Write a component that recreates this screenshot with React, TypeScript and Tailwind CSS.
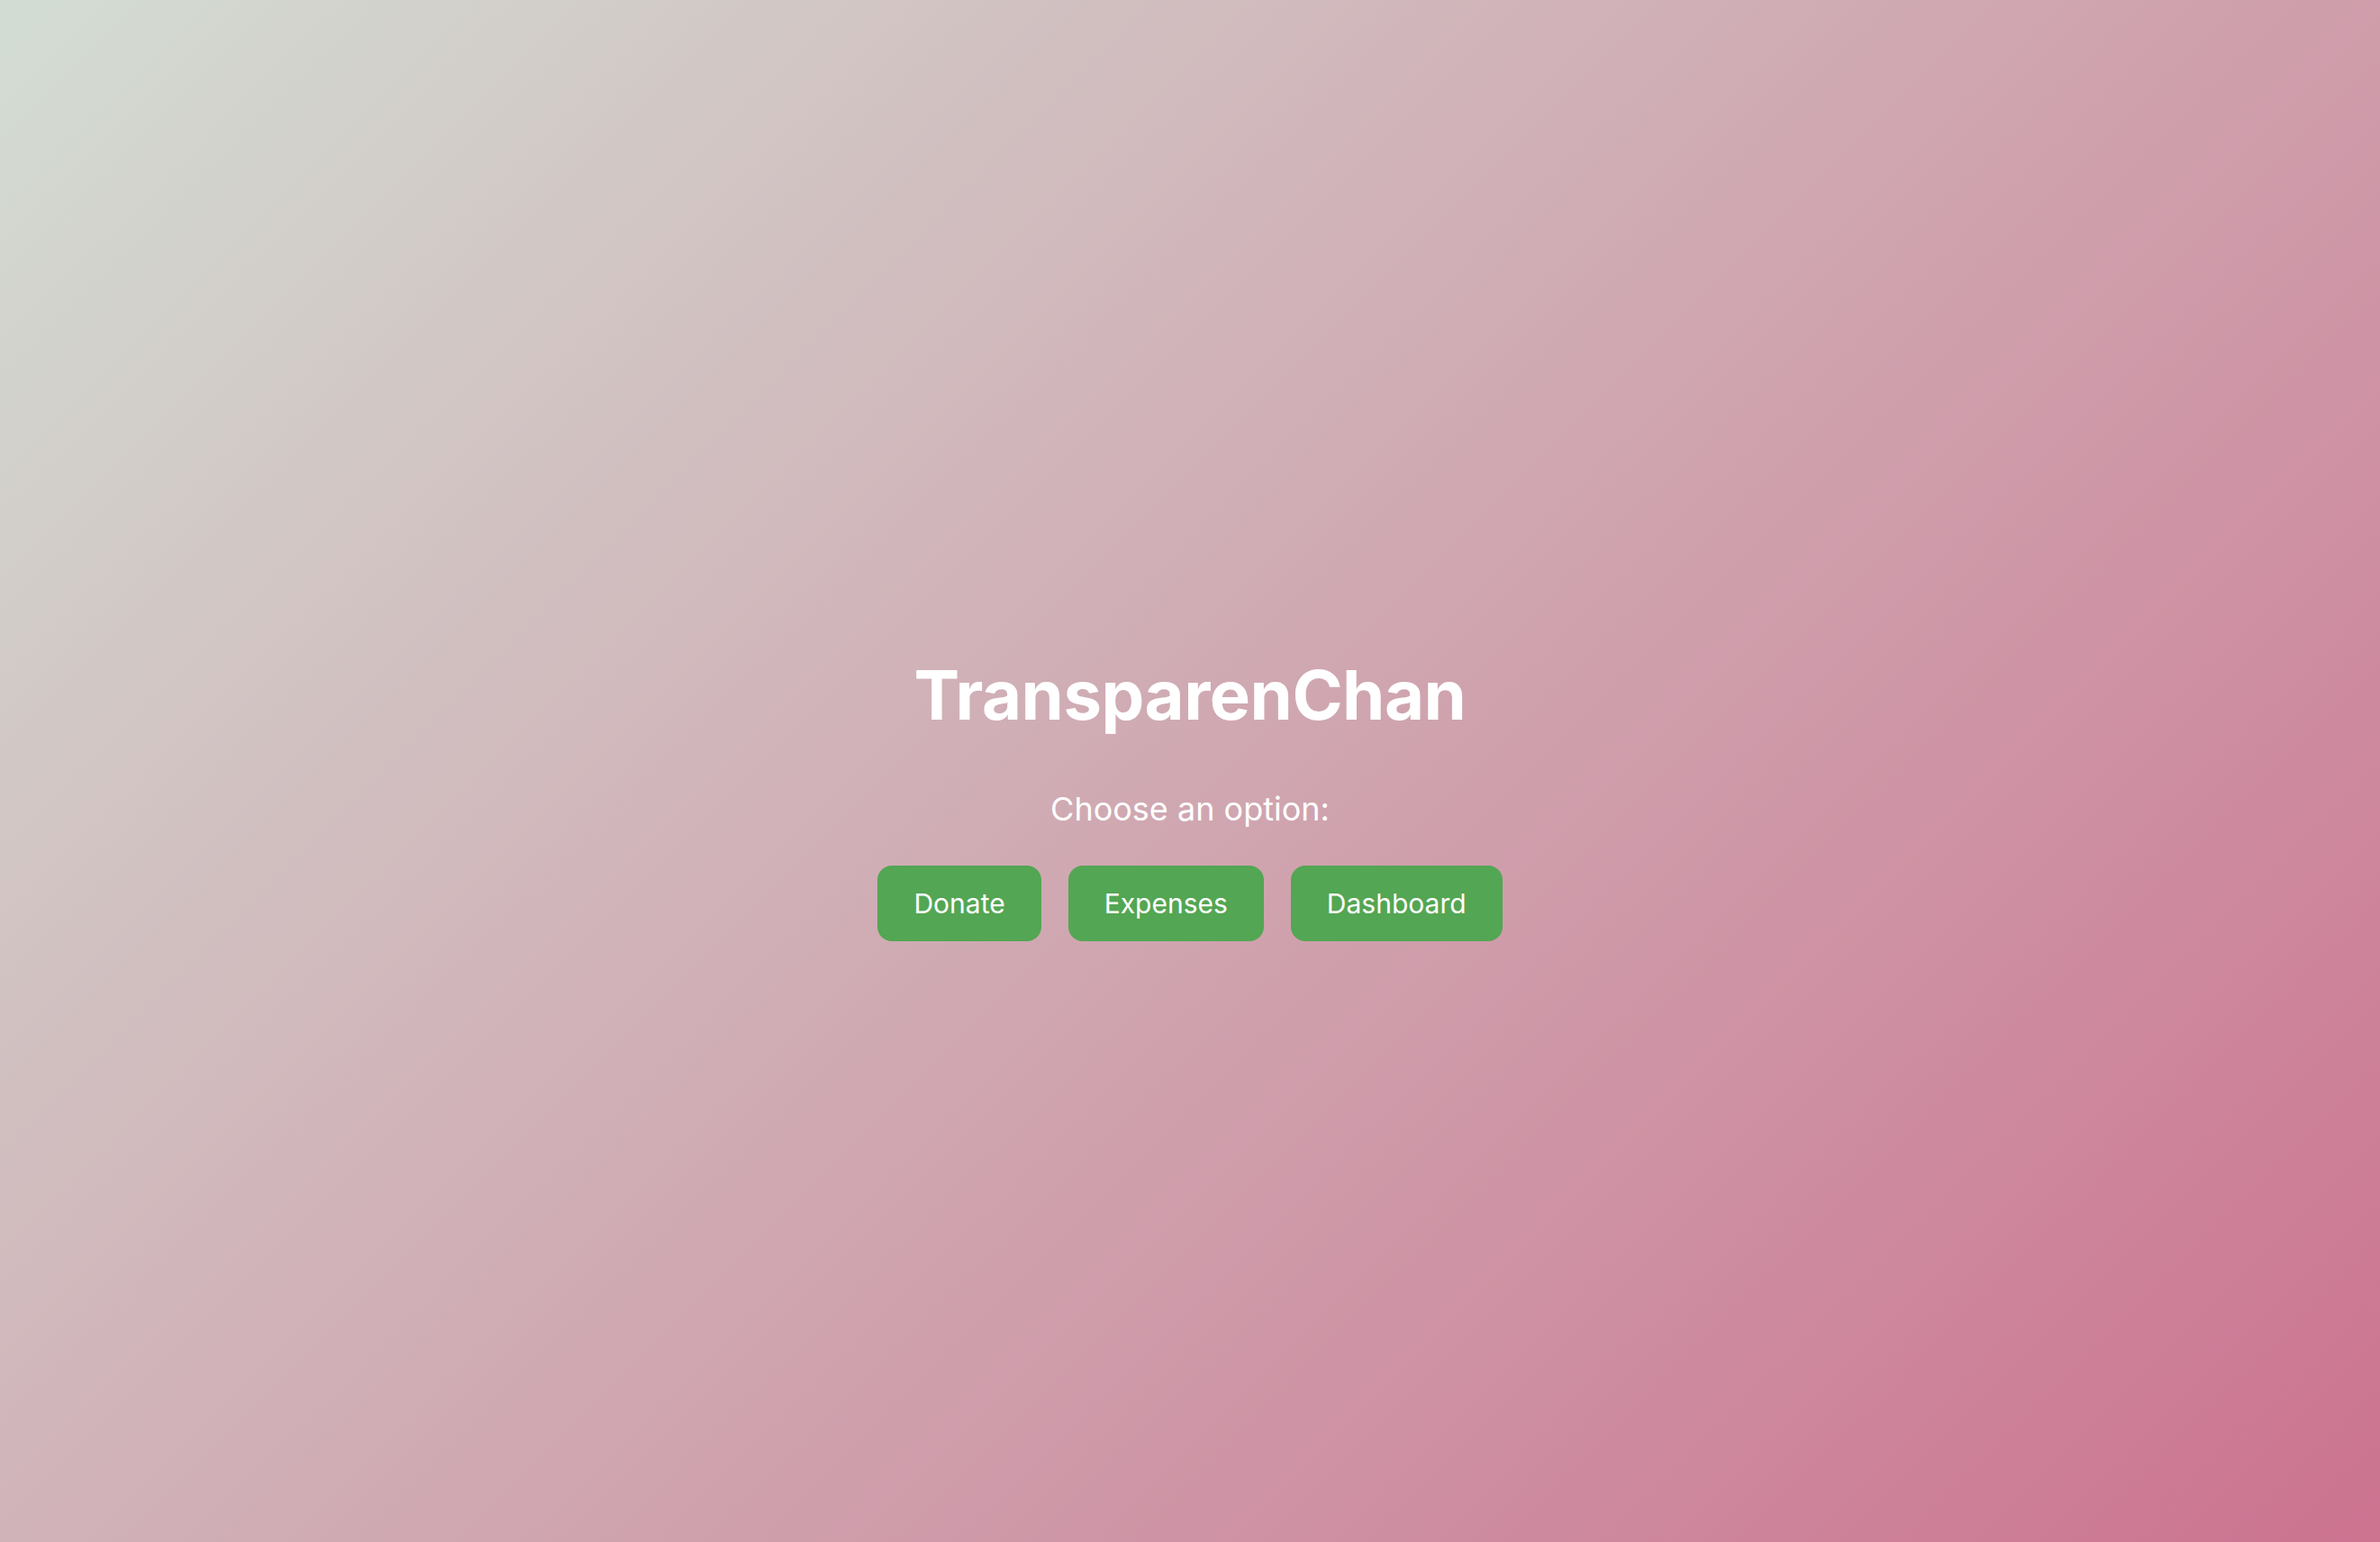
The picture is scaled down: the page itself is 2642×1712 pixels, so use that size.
export default function App() {
  const options = ["Donate", "Expenses", "Dashboard"];

  return (
    <div
      className="min-h-screen w-full flex flex-col items-center justify-center pt-[66px] bg-[linear-gradient(135deg,#d3ddd3_0%,#cc7390_100%)] text-white"
      style={{ fontFamily: "Inter, 'Noto Sans', sans-serif" }}
    >
      <h1 className="text-[76px] font-bold leading-none tracking-[-0.5px] mb-[71px]">
        TransparenChan
      </h1>
      <p className="text-[36px] leading-none mb-[45px]">Choose an option:</p>
      <div className="flex gap-[30px]">
        {options.map((label) => (
          <button
            key={label}
            className="bg-[#53a653] text-white text-[30px] leading-[36px] px-[40px] py-[24px] rounded-[16px]"
          >
            {label}
          </button>
        ))}
      </div>
    </div>
  );
}
